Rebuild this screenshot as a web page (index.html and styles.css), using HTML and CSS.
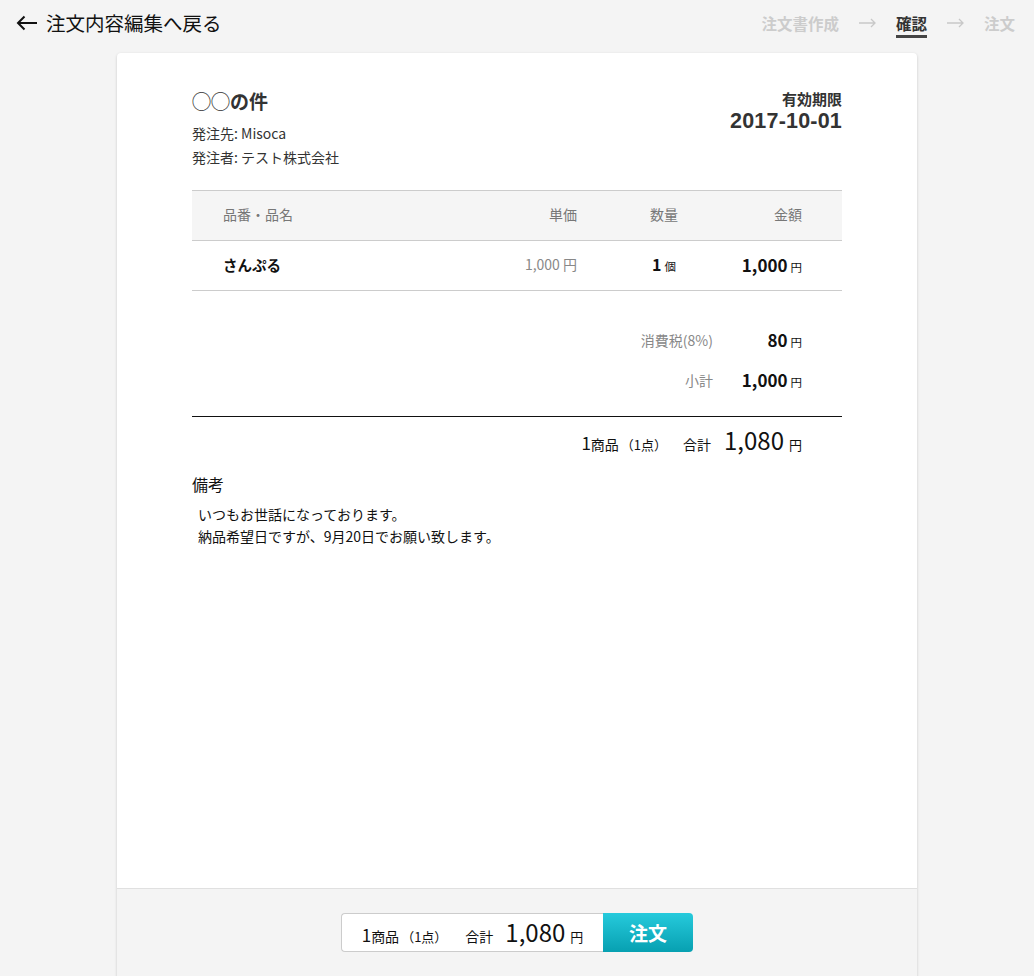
FILE: index.html
```html
<!DOCTYPE html>
<html lang="ja">
<head>
<meta charset="utf-8">
<title>確認</title>
<link rel="stylesheet" href="styles.css">
</head>
<body>
<header class="topbar">
  <a class="back" href="#">
    <svg class="back-icon" width="22" height="16" viewBox="0 0 22 16"><path d="M21 8H2M8.5 1.5L2 8l6.5 6.5" fill="none" stroke="#111" stroke-width="2"/></svg>
    <span>注文内容編集へ戻る</span>
  </a>
  <nav class="steps">
    <span class="step">注文書作成</span>
    <svg class="step-arrow" width="17" height="10" viewBox="0 0 17 10"><path d="M0 5h16M12 1l4 4-4 4" fill="none" stroke="#c8c8c8" stroke-width="1.3"/></svg>
    <span class="step active">確認</span>
    <svg class="step-arrow" width="17" height="10" viewBox="0 0 17 10"><path d="M0 5h16M12 1l4 4-4 4" fill="none" stroke="#c8c8c8" stroke-width="1.3"/></svg>
    <span class="step">注文</span>
  </nav>
</header>

<main class="card">
  <section class="doc">
    <div class="doc-head">
      <div class="doc-info">
        <h1 class="doc-title">◯◯の件</h1>
        <p class="doc-meta">発注先: Misoca</p>
        <p class="doc-meta">発注者: テスト株式会社</p>
      </div>
      <div class="doc-expire">
        <div class="expire-label">有効期限</div>
        <div class="expire-date">2017-10-01</div>
      </div>
    </div>

    <div class="items">
      <div class="row head">
        <div class="c-name">品番・品名</div>
        <div class="c-price">単価</div>
        <div class="c-qty">数量</div>
        <div class="c-amount">金額</div>
      </div>
      <div class="row item">
        <div class="c-name name-val">さんぷる</div>
        <div class="c-price price-val">1,000 円</div>
        <div class="c-qty"><b class="qty-num">1</b><span class="unit">個</span></div>
        <div class="c-amount"><b class="amt-num">1,000</b><span class="unit">円</span></div>
      </div>
    </div>

    <div class="sums">
      <div class="sum-row">
        <span class="sum-label">消費税(8%)</span>
        <span class="sum-val"><b>80</b><span class="unit">円</span></span>
      </div>
      <div class="sum-row">
        <span class="sum-label">小計</span>
        <span class="sum-val"><b>1,000</b><span class="unit">円</span></span>
      </div>
    </div>

    <div class="grand">
      <span class="cnt"><span class="cnt-num">1</span>商品<span class="cnt-pt">（1点）</span></span>
      <span class="g-label">合計</span>
      <span class="g-num">1,080</span>
      <span class="g-unit">円</span>
    </div>

    <div class="notes">
      <h2 class="notes-title">備考</h2>
      <p class="notes-text">いつもお世話になっております。<br>納品希望日ですが、9月20日でお願い致します。</p>
    </div>
  </section>

  <footer class="card-foot">
    <div class="order-box">
      <div class="order-sum">
        <span class="cnt"><span class="cnt-num">1</span>商品<span class="cnt-pt">（1点）</span></span>
        <span class="g-label">合計</span>
        <span class="g-num">1,080</span>
        <span class="g-unit">円</span>
      </div>
      <button class="order-btn">注文</button>
    </div>
  </footer>
</main>
</body>
</html>
```

FILE: styles.css
```css
* { box-sizing: border-box; }
html, body { margin: 0; padding: 0; }
body {
  background: #f4f4f4;
  font-family: "Noto Sans CJK JP", "Noto Sans", sans-serif;
  color: #222;
  height: 976px;
  overflow: hidden;
}
p, h1, h2 { margin: 0; }

.topbar {
  height: 53px;
  display: flex;
  align-items: flex-start;
  justify-content: space-between;
  padding: 0 19px 0 16px;
}
.back {
  display: flex;
  align-items: center;
  gap: 8px;
  color: #111;
  text-decoration: none;
  font-size: 19.5px;
  height: 45px;
  line-height: 1;
}
.steps {
  display: flex;
  align-items: flex-start;
  gap: 20px;
  padding-top: 12px;
  font-size: 15.5px;
  font-weight: bold;
  line-height: 22px;
}
.step { color: #cccccc; }
.step.active {
  color: #333;
  border-bottom: 3px solid #444;
  padding-bottom: 1px;
}
.step-arrow { margin-top: 6px; }

.card {
  width: 800px;
  margin: 0 auto;
  background: #fff;
  border-radius: 4px 4px 0 0;
  box-shadow: 0 1px 3px rgba(0,0,0,0.18);
  height: 960px;
  display: flex;
  flex-direction: column;
}
.doc {
  height: 835px;
  padding: 34px 75px 0;
}
.doc-head {
  display: flex;
  justify-content: space-between;
  align-items: flex-start;
}
.doc-title {
  font-size: 19px;
  font-weight: bold;
  color: #333;
  line-height: 28px;
  margin-bottom: 6px;
}
.doc-meta {
  font-size: 14px;
  line-height: 24px;
  color: #333;
}
.doc-expire { text-align: right; color: #333; padding-top: 1px; }
.expire-label { font-size: 15px; font-weight: bold; line-height: 22px; }
.expire-date {
  font-family: "Liberation Sans", Arial, sans-serif;
  font-size: 21.5px;
  font-weight: bold;
  line-height: 22px;
  letter-spacing: 0.2px;
}

.items {
  margin-top: 21px;
  border-top: 1px solid #ccc;
  border-bottom: 1px solid #ccc;
}
.row {
  display: grid;
  grid-template-columns: 1fr 100px 174px 51px;
  align-items: center;
  padding: 0 40px 3px 31px;
  height: 50px;
}
.row.head {
  background: #f5f5f5;
  border-bottom: 1px solid #ccc;
  color: #777;
  font-size: 14px;
}
.row.item { height: 49px; }
.c-price { text-align: right; }
.c-qty { text-align: center; }
.c-amount { display: flex; justify-content: flex-end; align-items: baseline; white-space: nowrap; }
.name-val { font-size: 14.5px; font-weight: bold; color: #111; }
.price-val { font-size: 14px; color: #888; }
.qty-num { font-size: 16px; color: #111; }
.amt-num { font-size: 17px; color: #111; }
.unit { font-size: 11.5px; margin-left: 3px; color: #111; }

.sums {
  padding: 30px 40px 15px 0;
  border-bottom: 1px solid #111;
}
.sum-row {
  display: flex;
  justify-content: flex-end;
  align-items: center;
  height: 40px;
  padding-bottom: 3px;
}
.sum-label { font-size: 14px; color: #888; }
.sum-val {
  width: 89px;
  display: flex;
  justify-content: flex-end;
  align-items: baseline;
}
.sum-val b { font-size: 17px; color: #111; }

.grand {
  display: flex;
  justify-content: flex-end;
  align-items: baseline;
  padding: 5px 40px 0 0;
  height: 46px;
  color: #111;
}
.cnt { font-size: 14px; }
.cnt-num { font-size: 17px; }
.cnt-pt { font-size: 13px; margin-left: 2px; }
.g-label { font-size: 14px; margin-left: 16px; }
.g-num { font-size: 24px; margin-left: 13px; }
.g-unit { font-size: 13px; margin-left: 5px; }

.notes { margin-top: 10px; }
.notes-title { font-size: 16px; font-weight: normal; line-height: 22px; color: #111; }
.notes-text { font-size: 14px; line-height: 22px; padding-left: 6px; margin-top: 8px; color: #111; }

.card-foot {
  flex: 1;
  background: #f4f4f4;
  border-top: 1px solid #e0e0e0;
  display: flex;
  justify-content: center;
  padding-top: 24px;
}
.order-box {
  display: flex;
  height: 39px;
  width: 352px;
}
.order-sum {
  flex: 1;
  background: #fff;
  border: 1px solid #ccc;
  border-right: none;
  border-radius: 4px 0 0 4px;
  display: flex;
  align-items: baseline;
  justify-content: center;
  padding: 0 4px 0 4px;
  color: #111;
}
.order-sum .g-label { margin-left: 18px; }
.order-sum .g-num { margin-left: 12px; font-size: 24px; }
.order-btn {
  width: 90px;
  border: none;
  border-radius: 0 4px 4px 0;
  background: linear-gradient(#26cadc, #07a0b1);
  color: #fff;
  font-family: "Noto Sans CJK JP", sans-serif;
  font-size: 19px;
  font-weight: bold;
  padding: 0;
}
```
